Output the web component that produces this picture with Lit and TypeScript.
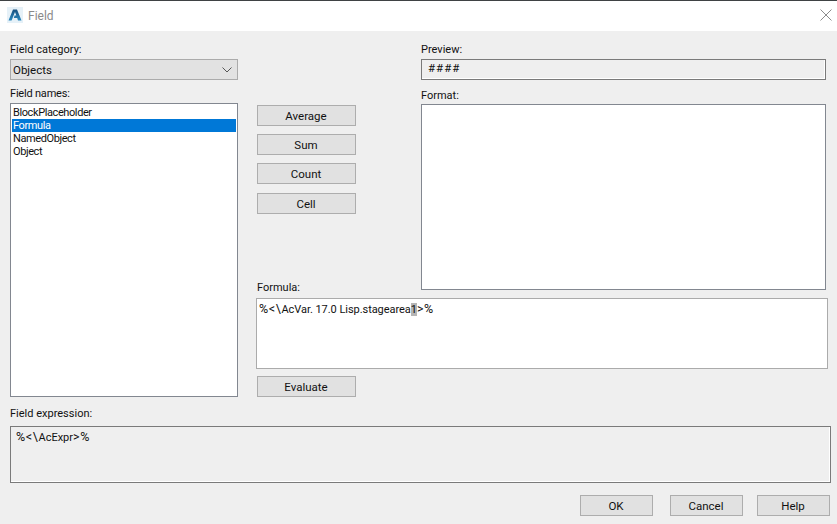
import { LitElement, html, css } from "lit";
import { customElement } from "lit/decorators.js";

@customElement("app-root")
export class AppRoot extends LitElement {
  static styles = css`
    :host { display: block; width: 837px; height: 524px; overflow: hidden; background: #efefef;
      font-family: Roboto, "Liberation Sans", Arial, sans-serif; font-size: 11px; color: #111; line-height: 13px; }
    .title { height: 30px; border-top: 1px solid #3f4244; background: #fff; display: flex; align-items: center; padding: 0 5px 0 7px; gap: 5px; }
    .title .name { color: #8a8a8a; font-size: 12px; flex: 1; }
    .logo { margin-top: -2px; }
    .close { margin-top: -2px; }
    .body { display: flex; flex-direction: column; }
    .main { display: flex; padding: 12px 0 0 10px; }
    .left { width: 228px; display: flex; flex-direction: column; }
    .combo { margin-top: 3px; height: 21px; box-sizing: border-box; border: 1px solid #ababab; background: #e2e2e2; display: flex; align-items: center; justify-content: space-between; padding: 1px 3px 0 2px; font-size: 11.5px; }
    .names-label { margin-top: 7px; letter-spacing: -.2px; }
    .list { margin-top: 3px; height: 294px; box-sizing: border-box; border: 1px solid #828790; background: #fff; padding: 2px 1px; letter-spacing: -.4px; }
    .list div { height: 13px; padding-left: 1px; }
    .list .sel { background: #0078d7; color: #fff; }
    .right { margin-left: 18px; width: 572px; display: flex; flex-direction: column; }
    .upper { display: flex; height: 251px; }
    .buttons { width: 165px; padding: 62px 0 0 1px; box-sizing: border-box; display: flex; flex-direction: column; gap: 8px; }
    .buttons .cell { margin-top: 1px; }
    .formula-label { margin-top: auto; }
    .btn { width: 99px; height: 21px; flex: none; box-sizing: border-box; border: 1px solid #adadad; background: #e1e1e1; display: flex; align-items: center; justify-content: center; padding: 1px 1px 0 0; font-size: 11.5px; }
    .fmt { width: 405px; display: flex; flex-direction: column; }
    .preview { margin-top: 3px; height: 21px; flex: none; box-sizing: border-box; border: 1px solid #7a7a7a; box-shadow: inset -1px -1px 0 #fff; padding: 2px 6px; letter-spacing: 1px; font-size: 11.5px; }
    .format-label { margin-top: 9px; }
    .format { margin-top: 2px; height: 186px; flex: none; box-sizing: border-box; border: 1px solid #828790; background: #fff; }
    .formula { margin-top: 4px; height: 71px; flex: none; box-sizing: border-box; border: 1px solid #ababab; background: #fff; padding: 3px 2px; letter-spacing: -.05px; }
    .sym { font-size: 12.5px; letter-spacing: .6px; }
    .caret { background: #b5b5b5; }
    .eval { margin: 7px 0 0 1px; }
    .expr-label { margin: 10px 0 0 10px; }
    .expr { margin: 6px 0 0 10px; width: 821px; height: 57px; box-sizing: border-box; border: 1px solid #7a7a7a; box-shadow: inset -1px -1px 0 #fff; padding: 3px 5px; }
    .footer { display: flex; padding: 12px 7px 0 0; justify-content: flex-end; }
    .footer .btn { width: 73px; margin-left: 17px; }
    .footer .btn:last-child { margin-left: 14px; }
    svg { display: block; }
  `;

  render() {
    return html`
      <div class="title">
        <svg class="logo" width="16" height="16" viewBox="0 0 16 16">
          <defs><linearGradient id="g" x1="0" y1="0" x2="0" y2="1"><stop offset="0" stop-color="#17507f"/><stop offset="1" stop-color="#2a87bd"/></linearGradient></defs>
          <rect width="16" height="16" fill="#e6f1f8"/>
          <path d="M1.5 13.5 L6 2.5 H10 L14.5 13.5 H11 L10.2 11 H6.8 L7.6 8.4 H9.3 L8 5 L4.6 13.5 Z" fill="url(#g)"/>
        </svg>
        <span class="name">Field</span>
        <svg class="close" width="12" height="12" viewBox="0 0 12 12"><path d="M.5 .5 L11.5 11.5 M11.5 .5 L.5 11.5" stroke="#8c8c8c" fill="none"/></svg>
      </div>
      <div class="body">
        <div class="main">
          <div class="left">
            <div>Field category:</div>
            <div class="combo"><span>Objects</span>
              <svg width="10" height="6" viewBox="0 0 10 6" style="margin-right:2px"><path d="M.5 .5 L5 5 L9.5 .5" stroke="#555" fill="none"/></svg>
            </div>
            <div class="names-label">Field names:</div>
            <div class="list">
              <div>BlockPlaceholder</div><div class="sel">Formula</div><div>NamedObject</div><div>Object</div>
            </div>
          </div>
          <div class="right">
            <div class="upper">
              <div class="buttons">
                <div class="btn">Average</div><div class="btn">Sum</div><div class="btn">Count</div><div class="btn cell">Cell</div>
                <div class="formula-label">Formula:</div>
              </div>
              <div class="fmt">
                <div>Preview:</div>
                <div class="preview">####</div>
                <div class="format-label">Format:</div>
                <div class="format"></div>
              </div>
            </div>
            <div class="formula"><span class="sym">%&lt;\\</span>AcVar. 17.0 Lisp.stagearea<span class="caret">1</span><span class="sym">&gt;%</span></div>
            <div class="btn eval">Evaluate</div>
          </div>
        </div>
        <div class="expr-label">Field expression:</div>
        <div class="expr"><span class="sym">%&lt;\\</span>AcExpr<span class="sym">&gt;%</span></div>
        <div class="footer">
          <div class="btn">OK</div><div class="btn">Cancel</div><div class="btn">Help</div>
        </div>
      </div>
    `;
  }
}
